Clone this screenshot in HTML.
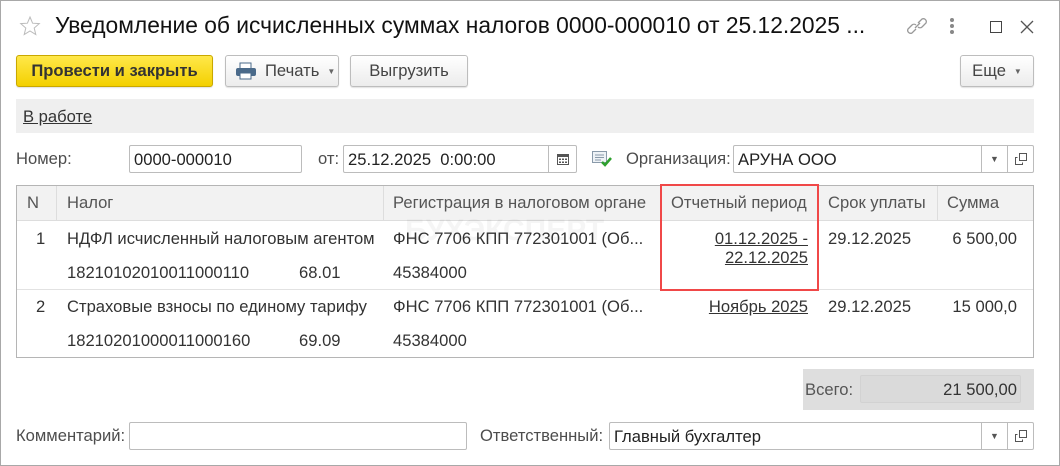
<!DOCTYPE html>
<html><head><meta charset="utf-8"><style>
*{box-sizing:border-box;margin:0;padding:0}
body{width:1060px;height:466px;background:#fff;font-family:"Liberation Sans",sans-serif;font-size:16.6px;color:#333;position:relative;overflow:hidden}
.a{position:absolute;white-space:nowrap}
.win{position:absolute;left:0;top:0;width:1060px;height:466px;border:1px solid #a8a8a8}
.btn{position:absolute;height:32px;border:1px solid #bdbdbd;border-radius:3px;background:linear-gradient(#fff,#ececec);color:#444;display:flex;align-items:center;justify-content:center;box-shadow:0 1px 1px rgba(0,0,0,.12)}
.inp{position:absolute;height:28px;border:1px solid #bcbcbc;border-radius:2px;background:#fff;padding-left:4px;line-height:27px;color:#222}
.lbl{position:absolute;color:#4d4d4d;line-height:28px}
.sb{position:absolute;top:0;height:26px;border-left:1px solid #bcbcbc;width:26px;display:flex;align-items:center;justify-content:center;font-size:9px;color:#555}
.h{color:#555}
u{text-decoration:underline}
</style></head><body>
<div class="win"></div>
<svg class="a" style="left:19px;top:15px" width="22" height="22" viewBox="0 0 22 22"><polygon points="11,2 13.6,8.2 20.3,8.6 15.2,13 16.8,19.6 11,16 5.2,19.6 6.8,13 1.7,8.6 8.4,8.2" fill="none" stroke="#bbb" stroke-width="1"/></svg>
<div class="a" style="left:55px;top:12px;font-size:22.8px;color:#111">Уведомление об исчисленных суммах налогов 0000-000010 от 25.12.2025 ...</div>
<svg class="a" style="left:906px;top:16px" width="24" height="20" viewBox="0 0 24 20"><g fill="none" stroke="#999" stroke-width="1.3"><path d="M10 13 L6 17 a3 3 0 0 1 -4 -4 L6 9 a3 3 0 0 1 4 0"/><path d="M12 7 L16 3 a3 3 0 0 1 4 4 L16 11 a3 3 0 0 1 -4 0"/><path d="M9 12 L14 7"/></g></svg>
<div class="a" style="left:950px;top:18px;width:4px"><div style="width:4px;height:4px;border-radius:2px;background:#888;margin-bottom:2px"></div><div style="width:4px;height:4px;border-radius:2px;background:#888;margin-bottom:2px"></div><div style="width:4px;height:4px;border-radius:2px;background:#888"></div></div>
<div class="a" style="left:990px;top:21px;width:12px;height:12px;border:1.3px solid #444"></div>
<svg class="a" style="left:1020px;top:20px" width="14" height="14"><path d="M1 1 L13 13 M13 1 L1 13" stroke="#555" stroke-width="1.3"/></svg>

<div class="btn" style="left:16px;top:55px;width:197px;background:linear-gradient(#ffe84a,#f3d000);border-color:#c9a800;font-weight:bold;color:#333">Провести и закрыть</div>
<div class="btn" style="left:225px;top:55px;width:114px;justify-content:flex-start;padding-left:9px">
<svg width="22" height="18" viewBox="0 0 22 18"><rect x="5" y="1" width="11" height="6" fill="#fff" stroke="#4a6a8a"/><rect x="1" y="6" width="20" height="8" rx="2" fill="#4a6a8a"/><rect x="5" y="11" width="11" height="6" fill="#fff" stroke="#4a6a8a"/></svg>
<span style="margin-left:8px">Печать</span><span style="font-size:8px;margin-left:8px;color:#666">▼</span></div>
<div class="btn" style="left:350px;top:55px;width:118px">Выгрузить</div>
<div class="btn" style="left:960px;top:55px;width:74px">Еще<span style="font-size:8px;margin-left:8px;color:#666">▼</span></div>

<div class="a" style="left:16px;top:99px;width:1018px;height:34px;background:#efefef"></div>
<div class="a" style="left:23px;top:107px;color:#333"><u>В работе</u></div>

<div class="lbl" style="left:16px;top:145px">Номер:</div>
<div class="inp" style="left:129px;top:145px;width:173px">0000-000010</div>
<div class="lbl" style="left:318px;top:145px">от:</div>
<div class="inp" style="left:343px;top:145px;width:234px">25.12.2025&nbsp; 0:00:00<div class="sb" style="right:0;width:28px"><svg width="12" height="12"><rect x="0.5" y="1.5" width="11" height="10" fill="none" stroke="#555"/><rect x="0" y="1" width="12" height="3" fill="#555"/><g fill="#555"><rect x="2" y="5.5" width="2" height="1.5"/><rect x="5" y="5.5" width="2" height="1.5"/><rect x="8" y="5.5" width="2" height="1.5"/><rect x="2" y="8.5" width="2" height="1.5"/><rect x="5" y="8.5" width="2" height="1.5"/><rect x="8" y="8.5" width="2" height="1.5"/></g></svg></div></div>
<svg class="a" style="left:591px;top:150px" width="22" height="18"><rect x="1.5" y="1.5" width="14" height="11" fill="#eef2f6" stroke="#8a9aaa"/><path d="M4 5h9M4 7.5h9M4 10h6" stroke="#8a9aaa"/><path d="M11 12 l3 3 l6 -7" fill="none" stroke="#2ea02e" stroke-width="2.5"/></svg>
<div class="lbl" style="left:626px;top:145px">Организация:</div>
<div class="inp" style="left:733px;top:145px;width:301px">АРУНА ООО<div class="sb" style="right:26px">▼</div><div class="sb" style="right:0"><svg width="12" height="12"><rect x="4.5" y="0.5" width="7" height="7" fill="none" stroke="#555"/><path d="M2.5 4.5 H0.5 V11.5 H7.5 V9.5" fill="none" stroke="#555"/></svg></div></div>

<div class="a" style="left:16px;top:185px;width:1018px;height:173px;border:1px solid #b5b5b5"></div>
<div class="a" style="left:17px;top:186px;width:1016px;height:35px;background:#f2f2f2;border-bottom:1px solid #ddd"></div>
<div class="a" style="left:56px;top:186px;width:1px;height:35px;background:#ddd"></div>
<div class="a" style="left:383px;top:186px;width:1px;height:35px;background:#ddd"></div>
<div class="a" style="left:817px;top:186px;width:1px;height:35px;background:#ddd"></div>
<div class="a" style="left:937px;top:186px;width:1px;height:35px;background:#ddd"></div>
<div class="a" style="left:17px;top:289px;width:1016px;height:1px;background:#e2e2e2"></div>
<div class="a" style="left:405px;top:214px;font-size:30px;font-weight:bold;color:rgba(0,0,0,.04)">БУХЭКСПЕРТ</div>
<div class="a h" style="left:27px;top:193px">N</div>
<div class="a h" style="left:67px;top:193px">Налог</div>
<div class="a h" style="left:393px;top:193px">Регистрация в налоговом органе</div>
<div class="a h" style="left:671px;top:193px">Отчетный период</div>
<div class="a h" style="left:828px;top:193px">Срок уплаты</div>
<div class="a h" style="left:947px;top:193px">Сумма</div>

<div class="a" style="left:36px;top:229px">1</div>
<div class="a" style="left:67px;top:229px">НДФЛ исчисленный налоговым агентом</div>
<div class="a" style="left:393px;top:229px">ФНС 7706 КПП 772301001 (Об...</div>
<div class="a" style="left:687px;top:229px;text-align:right;width:121px;line-height:19px"><u>01.12.2025 -</u><br><u>22.12.2025</u></div>
<div class="a" style="left:828px;top:229px">29.12.2025</div>
<div class="a" style="left:900px;top:229px;width:117px;text-align:right">6 500,00</div>
<div class="a" style="left:67px;top:263px">18210102010011000110</div>
<div class="a" style="left:299px;top:263px">68.01</div>
<div class="a" style="left:393px;top:263px">45384000</div>

<div class="a" style="left:36px;top:297px">2</div>
<div class="a" style="left:67px;top:297px">Страховые взносы по единому тарифу</div>
<div class="a" style="left:393px;top:297px">ФНС 7706 КПП 772301001 (Об...</div>
<div class="a" style="left:687px;top:297px;text-align:right;width:121px"><u>Ноябрь 2025</u></div>
<div class="a" style="left:828px;top:297px">29.12.2025</div>
<div class="a" style="left:900px;top:297px;width:117px;text-align:right">15 000,0</div>
<div class="a" style="left:67px;top:331px">18210201000011000160</div>
<div class="a" style="left:299px;top:331px">69.09</div>
<div class="a" style="left:393px;top:331px">45384000</div>

<div class="a" style="left:660px;top:184px;width:159px;height:107px;border:2px solid #f04848"></div>

<div class="a" style="left:803px;top:369px;width:231px;height:41px;background:#dedede"></div>
<div class="a" style="left:860px;top:375px;width:161px;height:28px;background:#dadada;border:1px solid #d2d2d2;border-radius:2px;text-align:right;padding-right:3px;line-height:27px;color:#333">21 500,00</div>
<div class="a" style="left:805px;top:380px;color:#555">Всего:</div>

<div class="lbl" style="left:16px;top:422px">Комментарий:</div>
<div class="inp" style="left:129px;top:422px;width:338px"></div>
<div class="lbl" style="left:480px;top:422px">Ответственный:</div>
<div class="inp" style="left:609px;top:422px;width:425px">Главный бухгалтер<div class="sb" style="right:26px">▼</div><div class="sb" style="right:0"><svg width="12" height="12"><rect x="4.5" y="0.5" width="7" height="7" fill="none" stroke="#555"/><path d="M2.5 4.5 H0.5 V11.5 H7.5 V9.5" fill="none" stroke="#555"/></svg></div></div>
</body></html>
